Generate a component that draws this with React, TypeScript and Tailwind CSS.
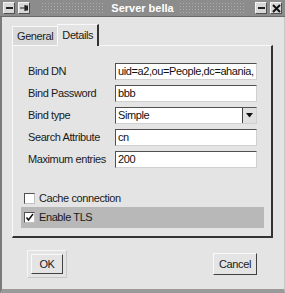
import React from "react";

const dots =
  "radial-gradient(circle, rgba(175,175,175,0.9) 0.6px, transparent 0.8px)";

function TitleBtn({ children }: { children: React.ReactNode }) {
  return (
    <div className="w-[12px] h-[12px] bg-[#d8d8d8] border-t border-l border-[#f4f4f4] border-r border-b border-r-[#505050] border-b-[#505050] flex items-center justify-center">
      {children}
    </div>
  );
}

function Field({ label, value, select }: { label: string; value: string; select?: boolean }) {
  return (
    <div className="flex items-center h-[17px]">
      <div className="w-[87px] text-[11px] text-[#1a1a1a] whitespace-nowrap">{label}</div>
      <div className="w-[142px] h-[17px] flex bg-white border-t border-l border-[#505050] border-r border-b border-r-[#d0d0d0] border-b-[#d0d0d0]">
        <div className="flex-1 pl-[2px] text-[11px] leading-[15px] text-[#111] overflow-hidden whitespace-nowrap">{value}</div>
        {select && (
          <div className="w-[14px] h-[15px] bg-[#e0e0e0] border-l border-[#404040] flex items-center justify-center">
            <svg width="7" height="5" viewBox="0 0 7 5"><path d="M0 0h7L3.5 4.5z" fill="#111" /></svg>
          </div>
        )}
      </div>
    </div>
  );
}

export default function App() {
  return (
    <div
      className="w-[285px] h-[293px] bg-[#e4e4e4] flex flex-col overflow-hidden tracking-[-0.4px]"
      style={{ fontFamily: '"Liberation Sans", Arial, sans-serif' }}
    >
      {/* Title bar */}
      <div className="h-[17px] bg-[#8c8c8c] flex items-center px-[3px] gap-[3px] border-b border-[#6a6a6a]">
        <TitleBtn>
          <div className="w-[7px] h-[2px] bg-[#222]" />
        </TitleBtn>
        <TitleBtn>
          <svg width="8" height="6" viewBox="0 0 8 6"><path d="M0 3h5M5 0v6M5 1h3v4H5" stroke="#222" strokeWidth="1.2" fill="#222" /></svg>
        </TitleBtn>
        <div className="flex-1 h-[12px] relative flex items-center justify-center">
          <div className="absolute inset-0 mx-[8px]" style={{ backgroundImage: dots, backgroundSize: "3px 3px" }} />
          <span className="relative bg-[#8c8c8c] px-[6px] text-white font-bold text-[11px] leading-[12px] tracking-normal">Server bella</span>
        </div>
        <TitleBtn>
          <div className="w-[7px] h-[2px] bg-[#222]" />
        </TitleBtn>
        <TitleBtn>
          <svg width="9" height="9" viewBox="0 0 9 9"><path d="M1 1l7 7M8 1L1 8" stroke="#111" strokeWidth="2" /></svg>
        </TitleBtn>
      </div>

      {/* Body */}
      <div className="flex-1 flex flex-col border-l-[2px] border-[#7a7a7a] border-r border-r-[#c8c8c8] border-b-[4px] border-b-[#9a9a9a]">
        <div className="flex-1 pl-[10px] pr-[11px] pt-[6px] flex flex-col">
          {/* Tabs */}
          <div className="flex items-end h-[22px]">
            <div className="h-[19px] px-[4px] flex items-center text-[11px] text-[#1a1a1a] bg-[#dadada] border-t border-l border-[#f8f8f8]">General</div>
            <div className="h-[22px] px-[4px] flex items-center text-[11px] text-[#1a1a1a] bg-[#e4e4e4] border-t border-l border-[#f8f8f8] border-r-[2px] border-r-[#333] -mb-px relative z-10">Details</div>
          </div>
          {/* Panel */}
          <div className="h-[193px] border-t border-l border-[#f8f8f8] border-r-[2px] border-b-[2px] border-r-[#333] border-b-[#333] flex flex-col pl-[15px] pr-[6px] pt-[17px]">
            <div className="flex flex-col gap-[5px]">
              <Field label="Bind DN" value="uid=a2,ou=People,dc=ahania," />
              <Field label="Bind Password" value="bbb" />
              <Field label="Bind type" value="Simple" select />
              <Field label="Search Attribute" value="cn" />
              <Field label="Maximum entries" value="200" />
            </div>
            <div className="mt-[21px] flex flex-col -ml-[7px]">
              <div className="h-[18px] flex items-center pl-[3px] gap-[4px] text-[11px] text-[#1a1a1a]">
                <div className="w-[11px] h-[11px] bg-white border-t border-l border-[#505050] border-r border-b border-r-[#c0c0c0] border-b-[#c0c0c0]" />
                Cache connection
              </div>
              <div className="h-[21px] flex items-center pl-[3px] gap-[4px] text-[11px] text-[#1a1a1a] bg-[#b8b8b8] w-[243px]">
                <div className="w-[11px] h-[11px] bg-white border-t border-l border-[#505050] border-r border-b border-r-[#c0c0c0] border-b-[#c0c0c0] flex items-center justify-center">
                  <svg width="9" height="9" viewBox="0 0 9 9"><path d="M1.5 4.5l2 2.5L8 1" stroke="#111" strokeWidth="1.5" fill="none" /></svg>
                </div>
                Enable TLS
              </div>
            </div>
          </div>
          {/* Buttons */}
          <div className="flex justify-between items-center mt-[12px] pl-[15px] pr-[16px]">
            <div className="p-[3px] border border-[#f6f6f6] border-r-[#c8c8c8] border-b-[#c8c8c8]">
              <div className="w-[32px] h-[20px] flex items-center justify-center text-[11px] text-[#1a1a1a] border-t border-l border-[#fafafa] border-r border-b border-r-[#404040] border-b-[#404040]">OK</div>
            </div>
            <div className="w-[44px] h-[22px] flex items-center justify-center text-[11px] text-[#1a1a1a] border-t border-l border-[#fafafa] border-r border-b border-r-[#404040] border-b-[#404040]">Cancel</div>
          </div>
        </div>
      </div>
    </div>
  );
}
